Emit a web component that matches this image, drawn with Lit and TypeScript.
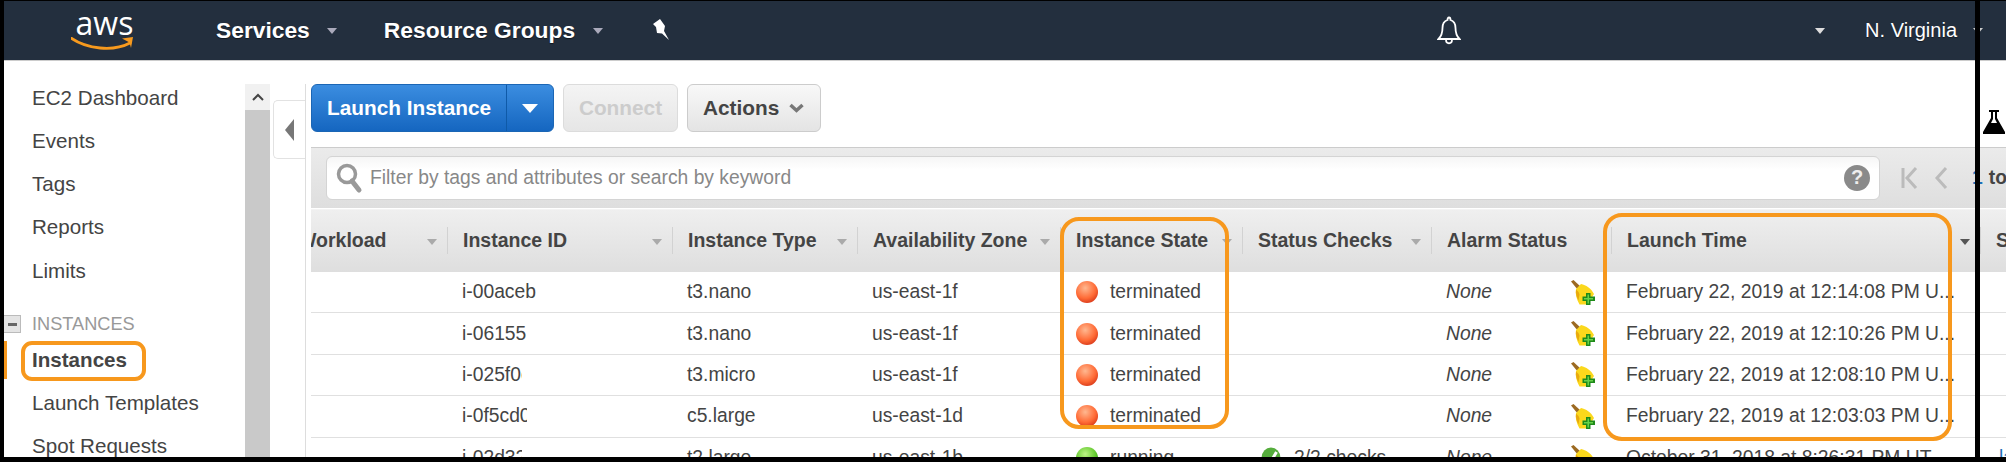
import { LitElement, html, css } from "lit";
import { customElement } from "lit/decorators.js";

const navTop = ["EC2 Dashboard", "Events", "Tags", "Reports", "Limits"];
const rows = [
  { id: "i-00aceb", clip: 76, type: "t3.nano", zone: "us-east-1f", state: "terminated", checks: "", time: "February 22, 2019 at 12:14:08 PM U..." },
  { id: "i-06155", clip: 76, type: "t3.nano", zone: "us-east-1f", state: "terminated", checks: "", time: "February 22, 2019 at 12:10:26 PM U..." },
  { id: "i-025f0c", clip: 60, type: "t3.micro", zone: "us-east-1f", state: "terminated", checks: "", time: "February 22, 2019 at 12:08:10 PM U..." },
  { id: "i-0f5cd0c", clip: 65, type: "c5.large", zone: "us-east-1d", state: "terminated", checks: "", time: "February 22, 2019 at 12:03:03 PM U..." },
  { id: "i-02d32c", clip: 60, type: "t2.large", zone: "us-east-1b", state: "running", checks: "2/2 checks", time: "October 31, 2018 at 8:26:31 PM UT" },
];
const cols = [
  { t: "Workload", arrow: true },
  { t: "Instance ID", arrow: true },
  { t: "Instance Type", arrow: true },
  { t: "Availability Zone", arrow: true },
  { t: "Instance State", arrow: true },
  { t: "Status Checks", arrow: true },
  { t: "Alarm Status", arrow: false },
  { t: "Launch Time", arrow: true, dark: true },
  { t: "S", arrow: false },
];

const caret = (cls: string) => html`<svg class=${cls} width="12" height="8" viewBox="0 0 12 8"><path d="M1 1h10L6 7z" fill="currentColor"/></svg>`;

const dot = (run: boolean) => html`<svg class="dot" width="24" height="24" viewBox="0 0 24 24">
  <defs><radialGradient id=${run ? "gg" : "rg"} cx=".42" cy=".32" r=".72">
    <stop offset="0" stop-color=${run ? "#bdf285" : "#ffb890"}/>
    <stop offset=".65" stop-color=${run ? "#62c92e" : "#ff6b36"}/>
    <stop offset="1" stop-color=${run ? "#2f8f12" : "#d8391a"}/>
  </radialGradient></defs>
  <circle cx="12" cy="12" r="11" fill=${`url(#${run ? "gg" : "rg"})`}/></svg>`;

const broom = html`<svg class="broom" width="25" height="25" viewBox="0 0 25 25">
  <path d="M0 1.500 2.500 0 10 7 7 10z" fill="#9c6a22"/>
  <path d="M5 9 10 4c5 1 10 4 13 10l-3 5-3 5.500H8.500C5.500 19 4 14 5 9z" fill="#fbd81c"/>
  <path d="M5 9.500c2 1.500 3 3 3.500 5L7.500 20.500C5.500 17 4.500 13 5 9.500z" fill="#e9a90f"/>
  <path d="M15 13h4.500v3.500H24v4.500h-4.500V25H15v-4h-3.500v-4.500H15z" fill="#1e8a1a"/>
  <path d="M16.500 14.500H18v3.500h4v1.500h-4v4h-1.500v-4H13V18h3.500z" fill="#66d248"/>
</svg>`;

const check = html`<svg class="check" width="20" height="22" viewBox="0 0 20 22">
  <ellipse cx="10" cy="11" rx="9.500" ry="10.500" fill="#55ad3c"/>
  <path d="M5 11.500 9 16 15.500 5" fill="none" stroke="#fff" stroke-width="3"/></svg>`;

@customElement("app-root")
export class AppRoot extends LitElement {
  static styles = css`
    :host { display: block; width: 2006px; height: 462px; }
    * { box-sizing: border-box; }
    .page { position: relative; width: 2006px; height: 462px; overflow: hidden; background: #fff;
      font-family: "Liberation Sans", Arial, sans-serif; color: #444; font-size: 19.3px; }

    .top { display: flex; align-items: center; height: 61px; background: #232f3e; border-bottom: 1px solid #ccc; color: #fff; white-space: nowrap; }
    .logo { display: flex; flex-direction: column; flex: none; width: 64px; margin-left: 71px; margin-top: 1px; }
    .aws { font-family: "Open Sans", sans-serif; font-size: 32px; line-height: 26px; height: 27px; text-align: center; color: #fff; margin-left: 3px; }
    .smile { display: block; }
    .menu { flex: none; font-weight: 700; font-size: 22.8px; text-shadow: 0 1px 1px rgba(0,0,0,.5); }
    .services { margin-left: 81px; }
    .groups { margin-left: 46px; }
    .c1 { flex: none; color: #aab; margin-left: 16px; margin-top: 2px; }
    .c2 { flex: none; color: #aab; margin-left: 17px; margin-top: 2px; }
    .pin { flex: none; margin-left: 48px; }
    .bell { flex: none; margin-left: 767px; }
    .rcaret { flex: none; color: #ddd; margin-left: 353px; margin-top: 2px; }
    .region { flex: none; font-size: 20px; margin-left: 39px; text-shadow: 0 1px 1px rgba(0,0,0,.4); }
    .rc2 { flex: none; color: #ccc; margin-left: 15px; margin-top: 2px; }

    .body { display: flex; height: 401px; }
    .side { width: 245px; flex: none; padding-top: 15.2px; font-size: 20.6px; overflow: hidden; }
    .nav { height: 43.1px; line-height: 43.1px; padding-left: 32px; }
    .group { display: flex; align-items: center; height: 33px; margin-top: 16px; font-size: 18.2px; color: #999; }
    .minus { display: flex; align-items: center; justify-content: center; width: 17px; height: 18px; margin-left: 4px; margin-right: 11px; background: #e4e4e4; border: 1px solid #bbb; border-left: 0; }
    .minus i { display: block; width: 9px; height: 3px; background: #666; }
    .active { height: 38px; line-height: 38px; font-weight: 700; color: #444; border-left: 3px solid #f7981d; margin-left: 4px; margin-bottom: 2.400px; padding-left: 25px; }
    .bar { width: 25px; flex: none; margin-top: 23px; background: #c9c9c9; }
    .bar-btn { display: flex; align-items: center; justify-content: center; height: 26px; background: #f1f1f1; }
    .handlecol { width: 33px; flex: none; margin-top: 23px; border-right: 1px solid #ddd; margin-left: 3px; padding-top: 16px; }
    .handle { display: flex; align-items: center; width: 32px; height: 59px; margin-right: -2px; padding-left: 11px; background: #fff; border: 1px solid #e2e2e2; border-right: 0; border-radius: 5px 0 0 5px; }
    .main { flex: 1; min-width: 0; margin-left: 5px; padding-top: 23px; }

    .btns { display: flex; gap: 9px; height: 48px; }
    .btn { display: flex; align-items: center; height: 48px; border-radius: 6px; font-weight: 700; font-size: 20.8px; }
    .launch { width: 243px; color: #fff; background: linear-gradient(#3b8de0, #1566c0); border: 1px solid #1b66b5; }
    .launch span { width: 195px; padding-left: 15px; height: 100%; line-height: 46px; border-right: 1px solid #0f5aa8; }
    .launch .c { flex: 1; display: flex; justify-content: center; }
    .connect { width: 115px; justify-content: center; color: #ccc; background: linear-gradient(#f4f4f4, #e6e6e6); border: 1px solid #dcdcdc; }
    .actions { width: 134px; padding-left: 15px; color: #444; background: linear-gradient(#f8f8f8, #e4e4e4); border: 1px solid #ccc; gap: 10px; }

    .filter { display: flex; align-items: center; height: 61px; margin-top: 15px; border-top: 1px solid #ccc; background: linear-gradient(#ebebeb, #dedede); padding-left: 15px; }
    .search { display: flex; align-items: center; flex: none; width: 1554px; height: 44px; margin-top: -1px; padding-left: 9px; background: linear-gradient(#f6f6f6, #fff 30%); border: 1px solid #d4d4d4; border-radius: 6px; color: #888; font-size: 19.3px; gap: 7px; }
    .search span { flex: 1; }
    .help { display: flex; align-items: center; justify-content: center; width: 26px; height: 26px; margin-right: 9px; border-radius: 50%; background: #8a8a8a; color: #eee; font-weight: 700; font-size: 20px; }
    .pager { display: flex; align-items: center; flex: none; margin-left: 21px; }
    .pager .pg2 { margin-left: 15px; }
    .pager b { font-weight: 700; margin-left: 24px; color: #444; white-space: nowrap; }
    .pager b i { font-style: normal; color: #1f6fb8; margin-right: 6px; }

    .table { display: grid; grid-template-columns: 136px 225px 185px 203px 182px 189px 180px 369px 100px; margin-top: 1px; border-top: 1px solid #f4f4f4; width: 1769px; }
    .th { display: flex; height: 62px; padding: 17px 9px 0 16px; font-weight: 700; font-size: 19.5px; line-height: 26px; background:
      linear-gradient(#d2d2d2, #d2d2d2) no-repeat 0 17px / 1px 27px,
      linear-gradient(#efefef, #dedede); white-space: nowrap; overflow: hidden; }
    .th:first-child { background: linear-gradient(#efefef, #dedede); padding-left: 0; }
    .th:first-child span { margin-left: -13px; }
    .th svg { margin-left: auto; margin-top: 11px; color: #aaa; flex: none; }
    .th .dark { color: #555; }
    .td { display: flex; align-items: center; height: 41.4px; padding-left: 15px; border-bottom: 1px solid #e0e0e0; white-space: nowrap; overflow: hidden; }
    .clip { display: block; overflow: hidden; }
    .td .dot { margin-right: 11px; flex: none; }
    .td .check { margin-right: 13px; flex: none; margin-left: 4px; }
    .alarm { padding-right: 15px; justify-content: space-between; }
    .alarm em { font-style: italic; }
    .link { color: #1f6fb8; padding-left: 19px; }

    .frame { position: absolute; border: 4px solid #f7981d; pointer-events: none; }
    .f1 { left: 21px; top: 341px; width: 125px; height: 40px; border-radius: 11px; }
    .f2 { left: 1060px; top: 217px; width: 169px; height: 212px; border-radius: 19px; }
    .f3 { left: 1603px; top: 213px; width: 349px; height: 228px; border-radius: 19px; }
    .edge { position: absolute; background: #000; }
    .e-t { left: 0; top: 0; width: 2006px; height: 1px; }
    .e-l { left: 0; top: 0; width: 4px; height: 462px; }
    .e-b { left: 0; top: 457px; width: 2006px; height: 5px; }
    .e-r { left: 1975px; top: 0; width: 5px; height: 462px; }
    .flask { position: absolute; left: 1982px; top: 109px; }
  `;

  render() {
    return html`<div class="page">
      <div class="top">
        <div class="logo">
          <div class="aws">aws</div>
          <svg class="smile" width="64" height="15" viewBox="0 0 64 15">
            <path d="M0 1C16 12 42 15 59 6" fill="none" stroke="#f79a1e" stroke-width="2.800" stroke-linecap="round"/>
            <path d="M51 1.500 62 0 60 11 58.500 5.500z" fill="#f79a1e"/>
          </svg>
        </div>
        <div class="menu services">Services</div>
        ${caret("c1")}
        <div class="menu groups">Resource Groups</div>
        ${caret("c2")}
        <svg class="pin" width="18" height="22" viewBox="0 0 18 22"><path d="M8 0 1 5l3 3 1 6 5 .5L17 21 12 12l1-5z" fill="#fff"/></svg>
        <svg class="bell" width="24" height="29" viewBox="0 0 24 29"><path d="M12 1.500c1 0 1.500 1 1.500 2.500 3.500 1 5 4 5 8 0 5 1 8 4 11H1.500c3-3 4-6 4-11 0-4 1.500-7 5-8 0-1.500.5-2.500 1.500-2.500zM9 23.500c0 5 6 5 6 0" fill="none" stroke="#fff" stroke-width="1.800"/></svg>
        ${caret("rcaret")}
        <div class="region">N. Virginia</div>
        ${caret("rc2")}
      </div>
      <div class="body">
        <div class="side">
          ${navTop.map((n) => html`<div class="nav">${n}</div>`)}
          <div class="group"><span class="minus"><i></i></span>INSTANCES</div>
          <div class="nav active">Instances</div>
          <div class="nav">Launch Templates</div>
          <div class="nav">Spot Requests</div>
        </div>
        <div class="bar"><div class="bar-btn"><svg width="12" height="8" viewBox="0 0 12 8"><path d="M1 7l5-5 5 5" fill="none" stroke="#444" stroke-width="2"/></svg></div></div>
        <div class="handlecol"><div class="handle"><svg width="9" height="22" viewBox="0 0 9 22"><path d="M9 0v22L0 11z" fill="#777"/></svg></div></div>
        <div class="main">
          <div class="btns">
            <div class="btn launch"><span>Launch Instance</span><div class="c"><svg width="16" height="9" viewBox="0 0 16 9"><path d="M0 0h16L8 9z" fill="#fff"/></svg></div></div>
            <div class="btn connect">Connect</div>
            <div class="btn actions">Actions <svg width="15" height="10" viewBox="0 0 15 10"><path d="M1.500 2 7.500 7.500 13.500 2" fill="none" stroke="#777" stroke-width="3.500"/></svg></div>
          </div>
          <div class="filter">
            <div class="search">
              <svg width="27" height="32" viewBox="0 0 27 32"><circle cx="11" cy="12" r="8.500" fill="none" stroke="#999" stroke-width="3.500"/><path d="M16 19l7 9" stroke="#999" stroke-width="5" stroke-linecap="round"/></svg>
              <span>Filter by tags and attributes or search by keyword</span>
              <div class="help">?</div>
            </div>
            <div class="pager">
              <svg width="18" height="24" viewBox="0 0 18 24"><path d="M2 2v20M15 2 6 12l9 10" fill="none" stroke="#bbb" stroke-width="3"/></svg>
              <svg class="pg2" width="14" height="24" viewBox="0 0 14 24"><path d="M12 2 3 12l9 10" fill="none" stroke="#bbb" stroke-width="3"/></svg>
              <b><i>1</i>to</b>
            </div>
          </div>
          <div class="table">
            ${cols.map((c) => html`<div class="th"><span>${c.t}</span>${c.arrow ? caret((c as any).dark ? "dark" : "") : ""}</div>`)}
            ${rows.map((r, i) => html`
              <div class="td"></div>
              <div class="td"><span class="clip" style="width:${r.clip}px">${r.id}</span></div>
              <div class="td">${r.type}</div>
              <div class="td">${r.zone}</div>
              <div class="td">${dot(r.state === "running")}${r.state}</div>
              <div class="td">${r.checks ? html`${check}${r.checks}` : ""}</div>
              <div class="td alarm"><em>None</em>${broom}</div>
              <div class="td">${r.time}</div>
              <div class="td link">${i === 4 ? "la" : ""}</div>`)}
          </div>
        </div>
      </div>
      <div class="frame f1"></div>
      <div class="frame f2"></div>
      <div class="frame f3"></div>
      <svg class="flask" width="24" height="25" viewBox="0 0 24 25"><path d="M7 1h10v2h-2v6l8 14v2H1v-2L9 9V3H7z" fill="#000"/><path d="M11 3h2v7l2 4H9l2-4z" fill="#fff"/></svg>
      <div class="edge e-t"></div><div class="edge e-l"></div><div class="edge e-b"></div><div class="edge e-r"></div>
    </div>`;
  }
}
